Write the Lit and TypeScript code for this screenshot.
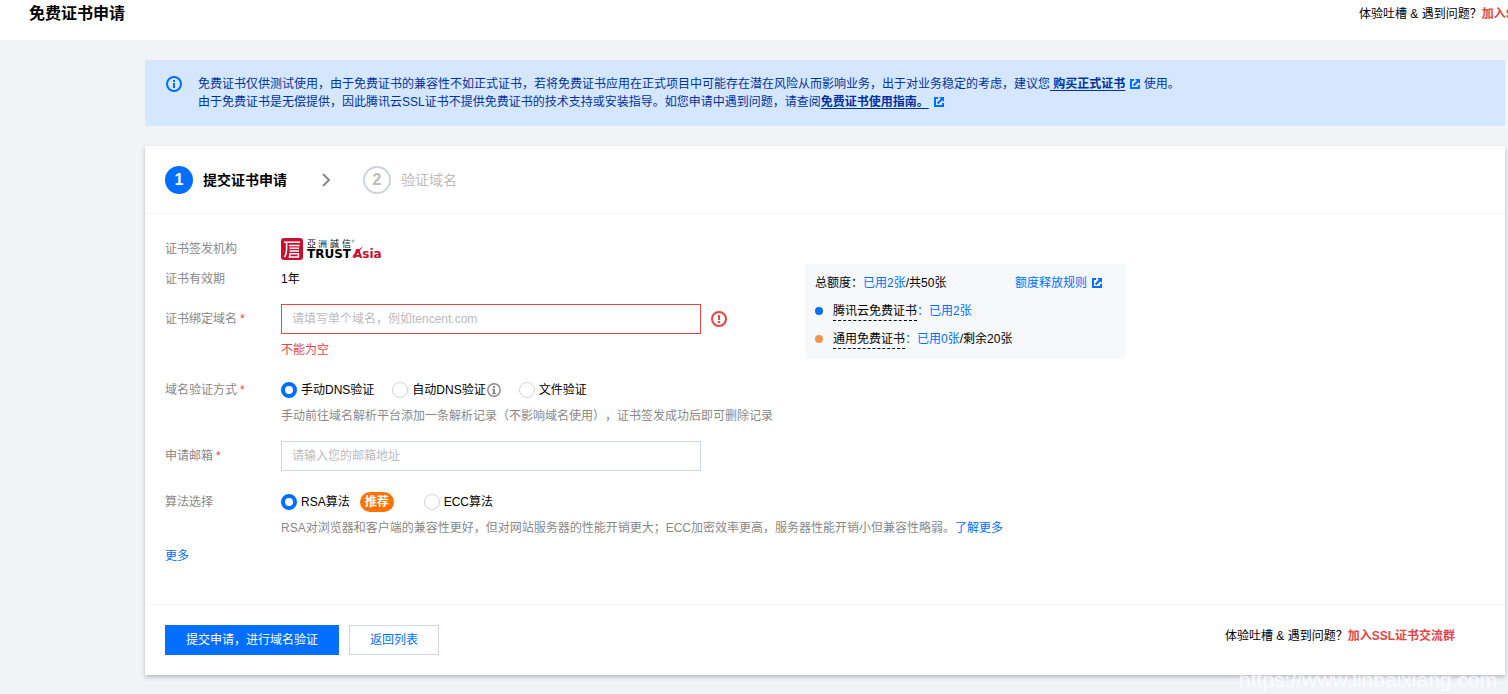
import { LitElement, html, css, svg } from "lit";
import { customElement, state } from "lit/decorators.js";

const externalIcon = html`<svg class="ext" viewBox="0 0 10 10" aria-hidden="true">
  <path fill="currentColor" d="M0 0H4V2H2V8H8V6H10V10H0Z" />
  <path fill="currentColor" d="M5 0H10V5L8.3 3.3L4.3 7.3L2.8 5.8L6.8 1.8Z" />
</svg>`;

const trustAsiaMark = svg`
  <rect x="0" y="0" width="22" height="22" rx="3" fill="#c8102e" />
  <g fill="none" stroke="#fff" stroke-width="1.5">
    <path d="M3 4.2H19" />
    <path d="M5.6 4.5V11C5.6 14.5 5 17 3.4 19" />
    <path d="M8 7.4H18.5M8.6 10.2H18M8.6 13H18" />
    <path d="M9 15.8H17.4V19H8.4Z" />
  </g>`;

@customElement("app-root")
export class AppRoot extends LitElement {
  @state() private verify = "dns";
  @state() private algorithm = "rsa";

  static styles = css`
    :host {
      display: block;
      min-height: 100vh;
      position: relative;
      overflow-x: hidden;
      background: #f2f3f7;
      color: #000;
      font: 12px/18px "Liberation Sans", "Noto Sans CJK SC", sans-serif;
      text-spacing-trim: space-all;
    }
    * { box-sizing: border-box; }
    a { color: #006eff; text-decoration: none; }
    button, input { font: inherit; margin: 0; }
    .ext { width: 10px; height: 10px; color: #006eff; vertical-align: -1px; margin-left: 5px; }

    .header {
      display: flex;
      justify-content: space-between;
      padding: 0 0 12px 29px;
      background: #fff;
      line-height: 28px;
    }
    .title { margin: 0; font-size: 16px; font-weight: 700; line-height: 28px; }
    .header-tip { flex: 0 0 149px; overflow: hidden; white-space: nowrap; }
    .join { color: #e54545; font-weight: 700; }

    .main { padding: 20px 3px 19px 145px; }
    .alert {
      display: flex;
      gap: 15px;
      padding: 15px 20px;
      margin-bottom: 20px;
      background: #d5e7ff;
      color: #00319c;
    }
    .alert p { margin: 0; }
    .alert-icon { flex: none; width: 18px; height: 18px; }
    .alert a { color: #00319c; font-weight: 700; text-decoration: underline; text-underline-offset: 2px; white-space: pre-wrap; }

    .card { background: #fff; box-shadow: 0 2px 4px rgba(54, 58, 80, 0.32); }
    .steps {
      display: flex;
      align-items: center;
      margin: 0;
      padding: 20px 20px 19px;
      list-style: none;
      border-bottom: 1px solid #f5f5f7;
      font-size: 14px;
    }
    .step { display: flex; align-items: center; gap: 10px; color: #bbb; }
    .step.current { color: #000; font-weight: 700; }
    .num {
      width: 28px;
      height: 28px;
      border: 2px solid #cfd5de;
      border-radius: 50%;
      font-size: 16px;
      font-weight: 700;
      line-height: 24px;
      text-align: center;
    }
    .current .num { border-color: #006eff; background: #006eff; color: #fff; }
    .chevron { width: 16px; height: 16px; margin: 0 30px; }

    .form { padding: 20px 20px 39px; }
    .top { display: flex; }
    .fields { flex: 0 0 640px; }
    .row { display: flex; line-height: 30px; }
    .gap-s { margin-top: 10px; }
    .gap { margin-top: 15px; }
    .gap-m { margin-top: 16px; }
    .label { flex: 0 0 116px; color: #888; }
    .star { color: #e54545; margin-left: 3px; }
    .logo { display: block; width: 102px; height: 22px; margin-top: 4px; }
    .logo-cn { font: 9px "Noto Sans CJK TC", sans-serif; }
    .logo-en { font: bold 12px "DejaVu Sans", sans-serif; }
    .control { display: flex; align-items: center; gap: 10px; }
    .input {
      width: 420px;
      height: 30px;
      padding: 0 10px;
      border: 1px solid #cfd5de;
      border-radius: 0;
      background: #fff;
      outline: 0;
    }
    .input::placeholder { color: #bbb; opacity: 1; }
    .input.invalid { border-color: #e54545; }
    .icon16 { width: 16px; height: 16px; }
    .error { margin: 6px 0 0; color: #e54545; line-height: 20px; }
    .hint { margin: 1px 0 0; color: #888; line-height: 20px; }
    .radios { display: flex; align-items: center; gap: 18px; }
    .radio { display: flex; align-items: center; gap: 4px; }
    .radio input {
      appearance: none;
      width: 16px;
      height: 16px;
      border: 1px solid #cfd5de;
      border-radius: 50%;
      background: #fff;
    }
    .radio input:checked { border: 4px solid #006eff; }
    .info { width: 14px; height: 14px; margin-left: -3px; }
    .badge {
      margin: 0 12px 0 6px;
      padding: 0 5px;
      border-radius: 10px;
      background: #ff7200;
      color: #fff;
      font-weight: 700;
      line-height: 20px;
    }
    .more { display: block; margin-top: 9px; padding: 0; border: 0; background: none; color: #006eff; cursor: pointer; }

    .quota {
      flex: 0 0 320px;
      align-self: flex-start;
      margin-top: 30px;
      padding: 5px 10px 6px;
      background: #f7f8fa;
      line-height: 28px;
    }
    .quota-line { display: flex; align-items: center; }
    .blue { color: #006eff; }
    .rules { margin-left: auto; padding-right: 13px; }
    .dot { width: 8px; height: 8px; margin-right: 10px; border-radius: 50%; background: #006eff; }
    .dot.orange { background: #ed964d; }
    .term { border-bottom: 1px dashed #000; line-height: 18px; }

    .footer {
      display: flex;
      align-items: flex-start;
      gap: 10px;
      padding: 20px 50px 20px 20px;
      border-top: 1px solid #f5f5f7;
    }
    .btn {
      height: 30px;
      padding: 0 20px;
      border: 1px solid #cfd5de;
      background: #fff;
      color: #006eff;
      line-height: 28px;
      cursor: pointer;
    }
    .btn.primary { border-color: #006eff; background: #006eff; color: #fff; }
    .footer-tip { margin-left: auto; line-height: 22px; }
    .watermark {
      position: absolute;
      right: 11px;
      bottom: 2px;
      color: rgba(255, 255, 255, 0.8);
      font-size: 21px;
      line-height: 24px;
      pointer-events: none;
    }
  `;

  private radio(group: "verify" | "algorithm", value: string, text: string, extra: unknown = "") {
    return html`<label class="radio">
      <input type="radio" name=${group} value=${value} .checked=${this[group] === value}
        @change=${() => { this[group] = value; }} /><span>${text}</span>${extra}
    </label>`;
  }

  render() {
    return html`
      <header class="header">
        <h1 class="title">免费证书申请</h1>
        <div class="header-tip">体验吐槽 &amp; 遇到问题？<a class="join" href="#">加入SSL证书交流群</a></div>
      </header>
      <main class="main">
        <div class="alert">
          <svg class="alert-icon" viewBox="0 0 18 18" aria-hidden="true">
            <circle cx="9" cy="9" r="7" fill="none" stroke="#006eff" stroke-width="2" />
            <path fill="#006eff" d="M8 5H10V7H8ZM8 8H10V13H8Z" />
          </svg>
          <div>
            <p>免费证书仅供测试使用，由于免费证书的兼容性不如正式证书，若将免费证书应用在正式项目中可能存在潜在风险从而影响业务，出于对业务稳定的考虑，建议您<a href="#"> 购买正式证书</a>${externalIcon} 使用。</p>
            <p>由于免费证书是无偿提供，因此腾讯云SSL证书不提供免费证书的技术支持或安装指导。如您申请中遇到问题，请查阅<a href="#">免费证书使用指南。</a>${externalIcon}</p>
          </div>
        </div>
        <section class="card">
          <ol class="steps">
            <li class="step current"><span class="num">1</span>提交证书申请</li>
            <svg class="chevron" viewBox="0 0 16 16" aria-hidden="true">
              <path d="M6 2L12 8L6 14" fill="none" stroke="#888" stroke-width="2" />
            </svg>
            <li class="step"><span class="num">2</span>验证域名</li>
          </ol>
          <form class="form" @submit=${(e: Event) => e.preventDefault()}>
            <div class="top">
              <div class="fields">
                <div class="row">
                  <span class="label">证书签发机构</span>
                  <svg class="logo" viewBox="0 0 102 22" role="img" aria-label="TrustAsia">
                    ${trustAsiaMark}
                    <text class="logo-cn" x="26 37 49 61" y="9">亞洲誠信</text>
                    <circle cx="72" cy="3" r="1" fill="none" stroke="#555" stroke-width="0.5" />
                    <text class="logo-en" x="26" y="20">TRUST</text>
                    <text class="logo-en" x="72" y="20" fill="#c8102e">Asia</text>
                    <path d="M70 20L75 14L82 8L78 14Z" fill="#c8102e" />
                  </svg>
                </div>
                <div class="row"><span class="label">证书有效期</span><span>1年</span></div>
                <div class="row gap-s">
                  <label class="label" for="domain">证书绑定域名<span class="star">*</span></label>
                  <div>
                    <div class="control">
                      <input class="input invalid" id="domain" type="text" placeholder="请填写单个域名，例如tencent.com" />
                      <svg class="icon16" viewBox="0 0 16 16" aria-hidden="true">
                        <circle cx="8" cy="8" r="7" fill="none" stroke="#e54545" stroke-width="2" />
                        <path fill="#e54545" d="M7 4H9V9H7ZM7 10H9V12H7Z" />
                      </svg>
                    </div>
                    <p class="error">不能为空</p>
                  </div>
                </div>
              </div>
              <aside class="quota">
                <div class="quota-line">
                  <span>总额度：</span><span class="blue">已用2张</span><span>/共50张</span>
                  <a class="rules" href="#">额度释放规则${externalIcon}</a>
                </div>
                <div class="quota-line">
                  <span class="dot"></span><span class="term">腾讯云免费证书</span><span class="blue">：已用2张</span>
                </div>
                <div class="quota-line">
                  <span class="dot orange"></span><span class="term">通用免费证书</span><span class="blue">：已用0张</span><span>/剩余20张</span>
                </div>
              </aside>
            </div>
            <div class="row gap">
              <span class="label">域名验证方式<span class="star">*</span></span>
              <div>
                <div class="radios" role="radiogroup" aria-label="域名验证方式">
                  ${this.radio("verify", "dns", "手动DNS验证")}
                  ${this.radio("verify", "auto", "自动DNS验证", html`<svg class="info" viewBox="0 0 14 14" aria-hidden="true">
                    <circle cx="7" cy="7" r="6.2" fill="none" stroke="#888" stroke-width="1.4" />
                    <path fill="#888" d="M6 3H8V5H6ZM5 6H8V10H9V11H5V10H6V7H5Z" />
                  </svg>`)}
                  ${this.radio("verify", "file", "文件验证")}
                </div>
                <p class="hint">手动前往域名解析平台添加一条解析记录（不影响域名使用），证书签发成功后即可删除记录</p>
              </div>
            </div>
            <div class="row gap">
              <label class="label" for="email">申请邮箱<span class="star">*</span></label>
              <input class="input" id="email" type="email" placeholder="请输入您的邮箱地址" />
            </div>
            <div class="row gap-m">
              <span class="label">算法选择</span>
              <div>
                <div class="radios" role="radiogroup" aria-label="算法选择">
                  ${this.radio("algorithm", "rsa", "RSA算法", html`<span class="badge">推荐</span>`)}
                  ${this.radio("algorithm", "ecc", "ECC算法")}
                </div>
                <p class="hint">RSA对浏览器和客户端的兼容性更好，但对网站服务器的性能开销更大；ECC加密效率更高，服务器性能开销小但兼容性略弱。<a href="#">了解更多</a></p>
              </div>
            </div>
            <button class="more" type="button">更多</button>
          </form>
          <footer class="footer">
            <button class="btn primary" type="button">提交申请，进行域名验证</button>
            <button class="btn" type="button">返回列表</button>
            <div class="footer-tip">体验吐槽 &amp; 遇到问题？<a class="join" href="#">加入SSL证书交流群</a></div>
          </footer>
        </section>
      </main>
      <div class="watermark">https://www.linbaixiang.com</div>
    `;
  }
}
